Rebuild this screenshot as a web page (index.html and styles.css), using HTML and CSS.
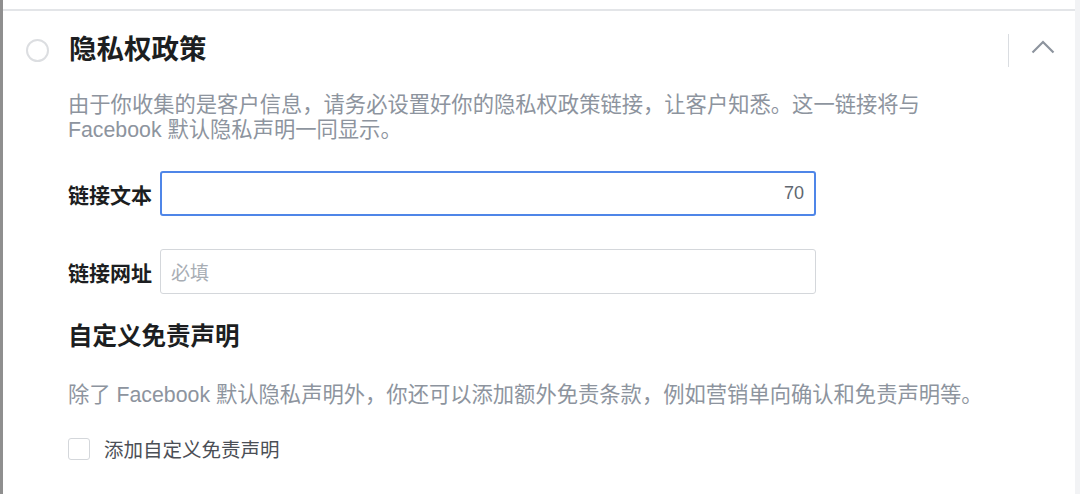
FILE: index.html
```html
<!DOCTYPE html>
<html lang="zh-CN">
<head>
<meta charset="utf-8">
<link rel="stylesheet" href="styles.css">
</head>
<body>
<div class="frame">
  <div class="edge"></div>
  <div class="column">
    <div class="prev"></div>
    <section class="card">
      <header class="card-head">
        <span class="radio"></span>
        <h1 class="title">隐私权政策</h1>
        <div class="head-tools">
          <span class="divider"></span>
          <svg class="chevron" width="24" height="14" viewBox="0 0 24 14"><path d="M1.5 12.5 L12 2 L22.5 12.5" fill="none" stroke="#8d949e" stroke-width="2.2"/></svg>
        </div>
      </header>
      <div class="body">
        <p class="desc">由于你收集的是客户信息，请务必设置好你的隐私权政策链接，让客户知悉。这一链接将与 Facebook 默认隐私声明一同显示。</p>
        <div class="field">
          <label class="label">链接文本</label>
          <div class="input focus"><span class="counter">70</span></div>
        </div>
        <div class="field second">
          <label class="label">链接网址</label>
          <div class="input"><span class="placeholder">必填</span></div>
        </div>
        <h2 class="subtitle">自定义免责声明</h2>
        <p class="desc desc2">除了 Facebook 默认隐私声明外，你还可以添加额外免责条款，例如营销单向确认和免责声明等。</p>
        <div class="check-row">
          <span class="checkbox"></span>
          <span class="check-label">添加自定义免责声明</span>
        </div>
      </div>
    </section>
  </div>
</div>
</body>
</html>
```

FILE: styles.css
```css
html, body {
  margin: 0;
  padding: 0;
}
body {
  background: #f2f3f5;
  font-family: "Liberation Sans", "Noto Sans CJK SC", sans-serif;
  width: 1080px;
  height: 494px;
  overflow: hidden;
}
.frame {
  display: flex;
  height: 494px;
}
.edge {
  width: 3px;
  background: #8f8f8f;
  flex: none;
}
.column {
  width: 1072px;
  background: #fff;
  display: flex;
  flex-direction: column;
}
.prev {
  height: 9px;
  background: #fff;
}
.card {
  border-top: 2px solid #e3e5e8;
  flex: 1;
}
.card-head {
  display: flex;
  align-items: center;
  padding: 22px 20px 0 23px;
  height: 34px;
}
.radio {
  width: 19px;
  height: 19px;
  border: 2px solid #dcdee1;
  border-radius: 50%;
  flex: none;
}
.title {
  margin: 0 0 0 20px;
  font-size: 27.5px;
  line-height: 34px;
  font-weight: bold;
  color: #1c1e21;
  flex: 1;
}
.head-tools {
  display: flex;
  align-items: center;
  gap: 22px;
}
.divider {
  width: 1px;
  height: 33px;
  background: #dadde1;
}
.chevron {
  display: block;
  margin-top: -6px;
}
.body {
  padding: 26px 0 0 65px;
}
.desc {
  margin: 0;
  width: 940px;
  font-size: 21.3px;
  line-height: 25px;
  color: #8d949e;
}
.field {
  display: flex;
  align-items: center;
  margin-top: 28px;
}
.field.second {
  margin-top: 33px;
}
.label {
  width: 92px;
  flex: none;
  font-size: 21px;
  font-weight: bold;
  color: #1c1e21;
}
.input {
  width: 656px;
  height: 45px;
  box-sizing: border-box;
  border: 1px solid #d4d7db;
  border-radius: 3px;
  display: flex;
  align-items: center;
  padding: 0 10px;
  background: #fff;
}
.input.focus {
  border: 2px solid #4f86e8;
  justify-content: flex-end;
}
.counter {
  font-size: 18px;
  color: #606770;
}
.placeholder {
  font-size: 19px;
  color: #a8adb4;
}
.subtitle {
  margin: 28px 0 0;
  font-size: 24.5px;
  line-height: 30px;
  font-weight: bold;
  color: #1c1e21;
}
.desc2 {
  width: auto;
  margin-top: 31px;
}
.check-row {
  display: flex;
  align-items: center;
  margin-top: 26px;
}
.checkbox {
  width: 20px;
  height: 20px;
  border: 1px solid #d4d7db;
  border-radius: 3px;
  flex: none;
}
.check-label {
  margin-left: 14px;
  font-size: 19.5px;
  color: #4b4f56;
}
```
